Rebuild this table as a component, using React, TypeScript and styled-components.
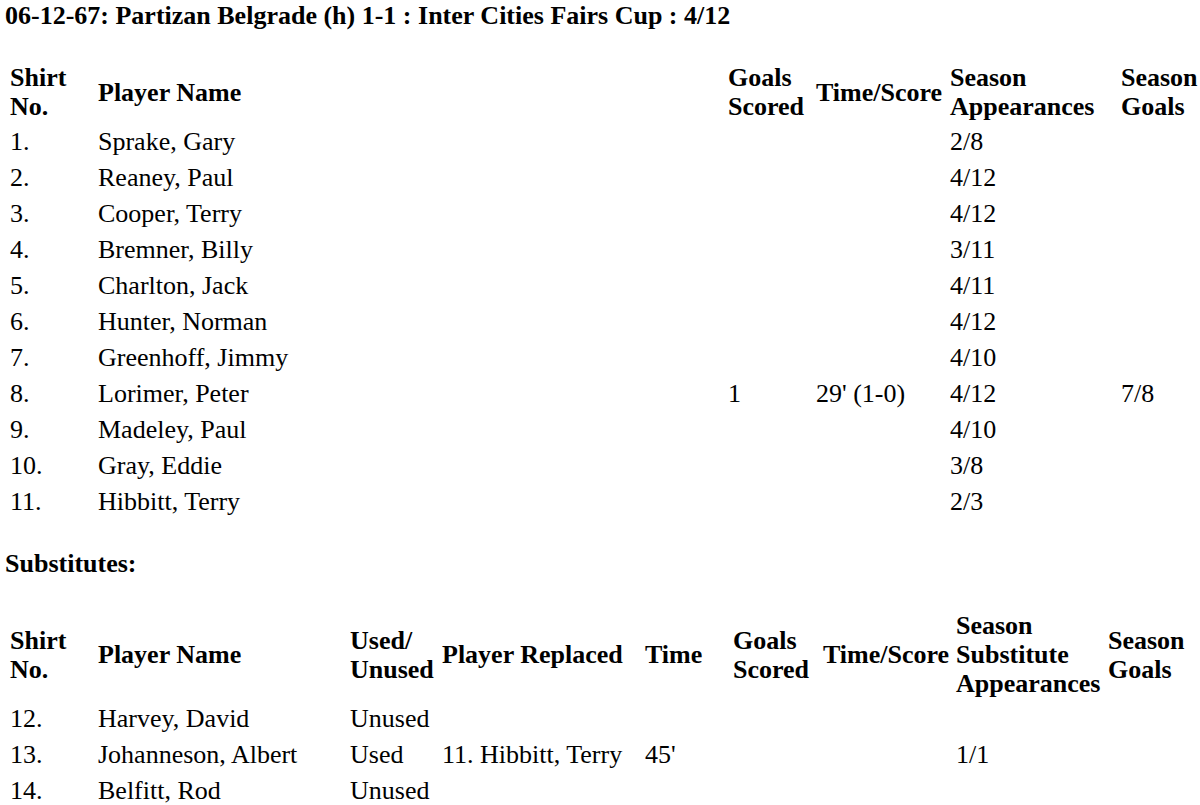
import React, { FC } from 'react'
import styled, { createGlobalStyle } from 'styled-components';

const GlobalStyle = createGlobalStyle`
html, body {
  overflow: hidden;
}
body {
  margin: 0;
  padding: 0 0 0 5px;
  background: #fff;
  color: #000;
  font-family: "Liberation Serif", "Times New Roman", serif;
  font-size: 26px;
}
`;

const MatchTitle = styled.div`
font-weight: bold;
line-height: 30px;
padding-top: 1px;
margin-bottom: 28px;
`;

const SectionTitle = styled.div`
font-weight: bold;
line-height: 30px;
margin: 28px 0 28px 0;
`;

const LineupTable = styled.table`
table-layout: fixed;
width: 1195px;
border-spacing: 2px;
border-collapse: separate;
`;

const HeadCell = styled.th<{ $nowrap?: boolean }>`
text-align: left;
vertical-align: middle;
font-weight: bold;
line-height: 29px;
padding: 2px 0 2px 3px;
white-space: ${p => (p.$nowrap ? 'nowrap' : 'normal')};
`;

const Cell = styled.td`
height: 34px;
line-height: 30px;
padding: 0 0 0 3px;
vertical-align: middle;
white-space: nowrap;
`;

interface Column {
  title: React.ReactNode;
  width: number;
  nowrap?: boolean;
}

const starters: string[][] = [
  ['1.', 'Sprake, Gary', '', '', '2/8', ''],
  ['2.', 'Reaney, Paul', '', '', '4/12', ''],
  ['3.', 'Cooper, Terry', '', '', '4/12', ''],
  ['4.', 'Bremner, Billy', '', '', '3/11', ''],
  ['5.', 'Charlton, Jack', '', '', '4/11', ''],
  ['6.', 'Hunter, Norman', '', '', '4/12', ''],
  ['7.', 'Greenhoff, Jimmy', '', '', '4/10', ''],
  ['8.', 'Lorimer, Peter', '1', "29' (1-0)", '4/12', '7/8'],
  ['9.', 'Madeley, Paul', '', '', '4/10', ''],
  ['10.', 'Gray, Eddie', '', '', '3/8', ''],
  ['11.', 'Hibbitt, Terry', '', '', '2/3', ''],
];

const subs: string[][] = [
  ['12.', 'Harvey, David', 'Unused', '', '', '', '', '', ''],
  ['13.', 'Johanneson, Albert', 'Used', '11. Hibbitt, Terry', "45'", '', '', '1/1', ''],
  ['14.', 'Belfitt, Rod', 'Unused', '', '', '', '', '', ''],
];

const starterCols: Column[] = [
  { title: 'Shirt No.', width: 86 },
  { title: 'Player Name', width: 628 },
  { title: 'Goals Scored', width: 86 },
  { title: 'Time/Score', width: 132, nowrap: true },
  { title: 'Season Appearances', width: 169 },
  { title: 'Season Goals', width: 80 },
];

const subCols: Column[] = [
  { title: 'Shirt No.', width: 86 },
  { title: 'Player Name', width: 250 },
  { title: <>Used/<br />Unused</>, width: 90 },
  { title: 'Player Replaced', width: 201, nowrap: true },
  { title: 'Time', width: 86 },
  { title: 'Goals Scored', width: 88 },
  { title: 'Time/Score', width: 131, nowrap: true },
  { title: 'Season Substitute Appearances', width: 150 },
  { title: 'Season Goals', width: 93 },
];

const Lineup: FC<{ columns: Column[]; rows: string[][] }> = ({ columns, rows }) => (
  <LineupTable>
    <colgroup>
      {columns.map((c, i) => <col key={i} style={{ width: c.width }} />)}
    </colgroup>
    <thead>
      <tr>
        {columns.map((c, i) => <HeadCell key={i} $nowrap={c.nowrap}>{c.title}</HeadCell>)}
      </tr>
    </thead>
    <tbody>
      {rows.map((r, i) => (
        <tr key={i}>
          {r.map((v, j) => <Cell key={j}>{v}</Cell>)}
        </tr>
      ))}
    </tbody>
  </LineupTable>
)

export default function App() {
  return (
    <>
      <GlobalStyle />
      <MatchTitle>06-12-67: Partizan Belgrade (h) 1-1 : Inter Cities Fairs Cup : 4/12</MatchTitle>
      <Lineup columns={starterCols} rows={starters} />
      <SectionTitle>Substitutes:</SectionTitle>
      <Lineup columns={subCols} rows={subs} />
    </>
  )
}
